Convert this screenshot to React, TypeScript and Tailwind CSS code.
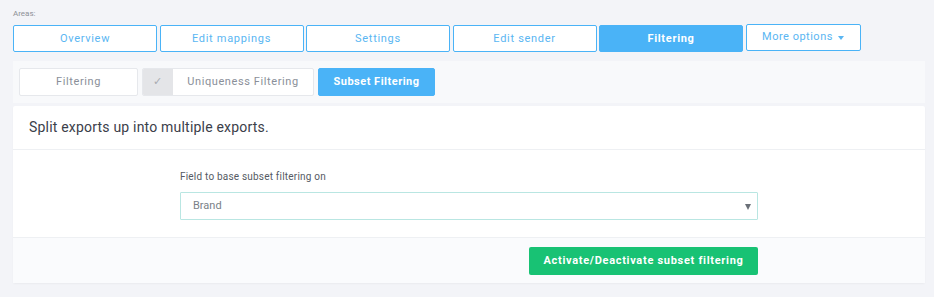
import { useState } from 'react'

const AREAS = ['Overview', 'Edit mappings', 'Settings', 'Edit sender', 'Filtering']

export default function App() {
  const [area, setArea] = useState('Filtering')
  const [tab, setTab] = useState('subset')
  const [field, setField] = useState('Brand')

  return (
    <div className="w-full h-[297px] bg-[#f3f4f8] pl-[13px] pr-[9px] pt-[8px] font-['Roboto',sans-serif]">
      <p className="text-[8px] leading-[12px] text-[#8d9097] mb-[5px]">Areas:</p>

      <div className="flex items-start gap-[2.5px]">
        {AREAS.map(a => (
          <button key={a} onClick={() => setArea(a)}
            className={`w-[144px] h-[27px] pt-[1px] rounded-[2px] border text-[11px] tracking-[0.7px] ${area === a
              ? 'bg-[#4ab3f7] border-[#4ab3f7] text-white font-bold'
              : 'bg-white border-[#4ab3f7] text-[#5ab6f2] font-normal'}`}>
            {a}
          </button>
        ))}
        <button className="w-[115px] h-[27px] -mt-[1px] rounded-[2px] border border-[#4ab3f7] bg-white text-[11px] font-normal tracking-[0.5px] text-[#5ab6f2] flex items-center justify-center gap-[5px]">
          More options
          <span className="w-0 h-0 border-l-[3.5px] border-r-[3.5px] border-t-[4px] border-l-transparent border-r-transparent border-t-[#5ab6f2]" />
        </button>
      </div>

      <div className="mt-[9px] bg-[#f8f9fb] h-[42px] flex items-center gap-[4px] pl-[6px]">
        <button onClick={() => setTab('filtering')}
          className={`w-[119px] h-[28px] rounded-[2px] border text-[11px] tracking-[0.6px] ${tab === 'filtering' ? 'bg-[#4ab3f7] border-[#4ab3f7] text-white font-bold' : 'bg-white border-[#e6e8ec] text-[#8a8f99] font-normal'}`}>
          Filtering
        </button>
        <button onClick={() => setTab('uniqueness')}
          className={`w-[172px] h-[28px] rounded-[2px] border flex overflow-hidden text-[11px] tracking-[0.6px] ${tab === 'uniqueness' ? 'bg-[#4ab3f7] border-[#4ab3f7] text-white font-bold' : 'bg-white border-[#e6e8ec] text-[#8a8f99] font-normal'}`}>
          <span className="w-[30px] h-full bg-[#e4e5e8] flex items-center justify-center text-[#a9acb2] text-[11px]">✓</span>
          <span className="flex-1 h-full flex items-center justify-center">Uniqueness Filtering</span>
        </button>
        <button onClick={() => setTab('subset')}
          className={`w-[117px] h-[28px] rounded-[2px] border text-[11px] tracking-[0.5px] ${tab === 'subset' ? 'bg-[#4ab3f7] border-[#4ab3f7] text-white font-bold' : 'bg-white border-[#e6e8ec] text-[#8a8f99] font-normal'}`}>
          Subset Filtering
        </button>
      </div>

      <div className="mt-[3px] bg-white rounded-[2px] shadow-[0_1px_2px_rgba(0,0,0,0.04)]">
        <div className="h-[44px] px-[16px] flex items-center border-b border-[#eef0f3]">
          <p className="text-[14px] tracking-[0.2px] text-[#3b404a]">Split exports up into multiple exports.</p>
        </div>

        <div className="pt-[21px] pb-[17px] border-b border-[#eef0f3]">
          <div className="w-[578px] mx-auto">
            <label className="block text-[10px] leading-[12px] tracking-[0.2px] text-[#555a63] mb-[9px]">Field to base subset filtering on</label>
            <div className="relative">
              <select value={field} onChange={e => setField(e.target.value)}
                className="w-full h-[28px] appearance-none bg-white border border-[#b9e6e2] rounded-[1px] pl-[12px] text-[11px] text-[#7a7f88] focus:outline-none">
                <option>Brand</option>
                <option>Category</option>
                <option>Supplier</option>
              </select>
              <span className="absolute right-[7px] top-[12px] w-0 h-0 border-l-[3.5px] border-r-[3.5px] border-t-[6px] border-l-transparent border-r-transparent border-t-[#6b7078]" />
            </div>
          </div>
        </div>

        <div className="h-[45px] bg-[#fafbfd] flex items-center">
          <div className="w-[578px] mx-auto flex justify-end">
            <button className="w-[229px] h-[28px] rounded-[2px] bg-[#18c274] text-white text-[11px] font-bold tracking-[0.7px]">
              Activate/Deactivate subset filtering
            </button>
          </div>
        </div>
      </div>
    </div>
  )
}
